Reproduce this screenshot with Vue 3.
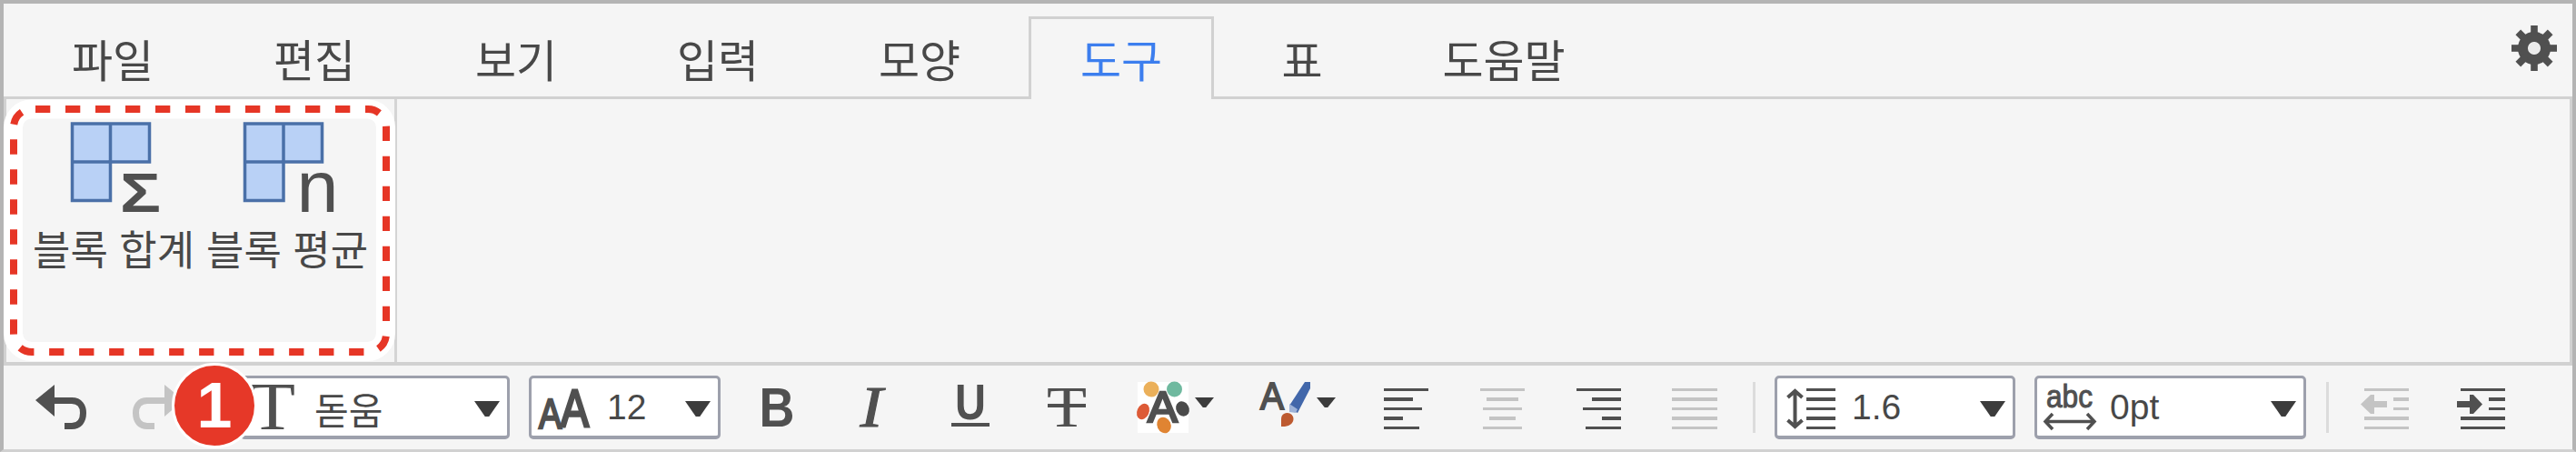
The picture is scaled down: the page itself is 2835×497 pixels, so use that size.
<script setup>
const tabs = [
  { label: '파일' },
  { label: '편집' },
  { label: '보기' },
  { label: '입력' },
  { label: '모양' },
  { label: '도구', active: true },
  { label: '표', size: 'short' },
  { label: '도움말', size: 'long' }
]

const rowY = [0, 10, 21, 31, 42]
const rowH = [3, 4, 3, 4, 3]
const aligns = [
  { name: 'left', rows: [[0, 49], [0, 32], [0, 42], [0, 21], [0, 39]] },
  { name: 'center', off: true, rows: [[0, 49], [7, 35], [3, 43], [10, 29], [3, 43]] },
  { name: 'right', rows: [[0, 49], [17, 32], [7, 42], [28, 21], [10, 39]] },
  { name: 'justify', off: true, rows: [[0, 50], [0, 50], [0, 50], [0, 50], [0, 50]] }
]
</script>

<template>
  <div class="editor">
    <nav class="tabs">
      <div v-for="t in tabs" :key="t.label" class="tab" :class="[t.size, { active: t.active }]">
        <span>{{ t.label }}</span>
      </div>
      <svg class="gear" width="50" height="50" viewBox="-25 -25 50 50">
        <circle r="12.5" fill="none" stroke="#505050" stroke-width="11" />
        <g fill="#505050">
          <rect v-for="a in [0, 90, 180, 270]" :key="a" x="-3.8" y="-25" width="7.6" height="12" :transform="`rotate(${a})`" />
          <rect v-for="a in [45, 135, 225, 315]" :key="a" x="-4" y="-25" width="8" height="12" :transform="`rotate(${a})`" />
        </g>
        <circle r="6.5" fill="#ebebeb" />
      </svg>
    </nav>

    <section class="ribbon">
      <div class="group">
        <div class="tool">
          <svg width="100" height="102" viewBox="0 0 100 102">
            <path d="M1.5 2H86.5V44H43.5V86.5H1.5Z" fill="#b9d1f6" stroke="#4a70a8" stroke-width="3.5" />
            <path d="M43.5 2V44M1.5 44H43.5" stroke="#4a70a8" stroke-width="3.5" />
            <text x="54" y="99" font-size="62" font-weight="700" textLength="45" lengthAdjust="spacingAndGlyphs">Σ</text>
          </svg>
          <span>블록 합계</span>
        </div>
        <div class="tool second">
          <svg width="102" height="102" viewBox="0 0 102 102">
            <path d="M1.5 2H86.5V44H44V86.5H1.5Z" fill="#b9d1f6" stroke="#4a70a8" stroke-width="3.5" />
            <path d="M44 2V44M1.5 44H44" stroke="#4a70a8" stroke-width="3.5" />
            <text x="58.5" y="99" font-size="79" textLength="46" lengthAdjust="spacingAndGlyphs">n</text>
          </svg>
          <span>블록 평균</span>
        </div>
      </div>
      <svg class="callout" width="434" height="292" viewBox="0 107 434 292">
        <rect x="14.5" y="120" width="410" height="266.5" rx="20" fill="none" stroke="#fff" stroke-width="21" />
        <path d="M39 120H405A20 20 0 0 1 425 140V367A20 20 0 0 1 405 387H35A20 20 0 0 1 15 367V140A20 20 0 0 1 35 120Z" fill="none" stroke="#e63626" stroke-width="8" stroke-dasharray="16.3 16.7" />
      </svg>
    </section>

    <section class="bar">
      <svg class="undo" width="57" height="50" viewBox="0 0 57 50">
        <path d="M0 17L21 0V35Z" fill="#505050" />
        <path d="M18 17.5H40C49 17.5 52.500 24 52.500 31C52.500 40 48 45.500 40 45.500H32" fill="none" stroke="#505050" stroke-width="7" />
      </svg>
      <svg class="redo" width="57" height="50" viewBox="0 0 57 50">
        <path d="M57 17L36 0V35Z" fill="#c4c4c4" />
        <path d="M39 17.5H17C8 17.5 4.500 24 4.500 31C4.500 40 9 45.500 17 45.500H25" fill="none" stroke="#c4c4c4" stroke-width="7" />
      </svg>

      <div class="select font">
        <svg width="50" height="64" viewBox="0 0 50 64">
          <text class="serif" x="0" y="56" font-size="74" textLength="50" lengthAdjust="spacingAndGlyphs">T</text>
        </svg>
        <span class="ko">돋움</span>
        <i class="caret"></i>
      </div>

      <div class="select size">
        <svg width="58" height="64" viewBox="0 0 58 64">
          <text x="1" y="54.500" font-size="46" stroke="#505050" stroke-width="2.500" textLength="25" lengthAdjust="spacingAndGlyphs">A</text>
          <text x="25" y="53" font-size="58" stroke="#505050" stroke-width="3" textLength="31" lengthAdjust="spacingAndGlyphs">A</text>
        </svg>
        <span>12</span>
        <i class="caret"></i>
      </div>

      <svg class="bold" width="34" height="56" viewBox="0 0 34 56">
        <text x="-3.500" y="49" font-size="61" font-weight="700" textLength="39" lengthAdjust="spacingAndGlyphs">B</text>
      </svg>
      <svg class="italic" width="34" height="56" viewBox="0 0 34 56">
        <text class="serif" x="1.500" y="48.500" font-size="63" font-style="italic" stroke="#505050" stroke-width="1" textLength="25" lengthAdjust="spacingAndGlyphs">I</text>
      </svg>
      <svg class="under" width="42" height="56" viewBox="0 0 42 56">
        <text x="4" y="41" font-size="55" font-weight="700" textLength="34" lengthAdjust="spacingAndGlyphs">U</text>
        <rect x="0" y="45" width="42" height="4" fill="#505050" />
      </svg>
      <svg class="strike" width="42" height="56" viewBox="0 0 42 56">
        <text class="serif" x="-1" y="49" font-size="64" textLength="44" lengthAdjust="spacingAndGlyphs">T</text>
        <rect x="0" y="24" width="42" height="4" fill="#505050" />
      </svg>

      <svg class="palette" width="56" height="56" viewBox="0 0 56 56">
        <rect width="56" height="56" fill="#fff" />
        <circle cx="15" cy="8" r="8.500" fill="#ebb05a" />
        <circle cx="40.500" cy="8" r="8.500" fill="#6fb99f" />
        <ellipse cx="6" cy="32.500" rx="6.500" ry="9" transform="rotate(24 6 32.500)" fill="#dd5a36" />
        <ellipse cx="49.500" cy="29.500" rx="7" ry="8.500" transform="rotate(-30 49.500 29.500)" fill="#4a4a4a" />
        <ellipse cx="29" cy="47.500" rx="7.500" ry="9" transform="rotate(-25 29 47.500)" fill="#e08432" />
        <text x="11" y="44" font-size="48" stroke="#505050" stroke-width="2.500" textLength="33" lengthAdjust="spacingAndGlyphs">A</text>
      </svg>
      <i class="caret small"></i>
      <svg class="brush" width="56" height="56" viewBox="0 0 56 56">
        <text x="1" y="30" font-size="42" stroke="#505050" stroke-width="2" textLength="26" lengthAdjust="spacingAndGlyphs">A</text>
        <path d="M50 0H56V7L42 34L36 31L33 26Z" fill="#4267aa" />
        <path d="M33 24L42 30L40 34L33 33Z" fill="#9eb3d8" />
        <path d="M27 35C32 32 38 36 37.500 41C37 47 31 49.500 24 49V41C24 38 25 36 27 35Z" fill="#bd5a30" />
      </svg>
      <i class="caret small"></i>

      <svg v-for="a in aligns" :key="a.name" class="align" :class="a.name" width="50" height="46" viewBox="0 0 50 46">
        <rect v-for="(r, i) in a.rows" :key="i" :x="r[0]" :y="rowY[i]" :width="r[1]" :height="rowH[i]" :fill="a.off ? '#c4c4c4' : '#505050'" />
      </svg>
      <i class="sep first"></i>

      <div class="select line">
        <svg width="54" height="46" viewBox="0 0 54 46">
          <rect v-for="(y, i) in rowY" :key="y" x="22" :y="y" width="32" :height="rowH[i]" fill="#505050" />
          <path d="M9.500 3V42M1.500 10L9.500 3L17.500 10M1.500 35L9.500 42L17.500 35" fill="none" stroke="#505050" stroke-width="4" />
        </svg>
        <span>1.6</span>
        <i class="caret"></i>
      </div>

      <div class="select spacing">
        <svg width="58" height="54" viewBox="0 0 58 54">
          <text x="3" y="27.500" font-size="35" stroke="#505050" stroke-width="1" textLength="51" lengthAdjust="spacingAndGlyphs">abc</text>
          <path d="M2 43.500H56M10 35L2 43.500L10 52M48 35L56 43.500L48 52" fill="none" stroke="#505050" stroke-width="3.500" />
        </svg>
        <span>0pt</span>
        <i class="caret"></i>
      </div>
      <i class="sep second"></i>

      <svg class="outdent" width="53" height="46" viewBox="0 0 53 46" fill="#c4c4c4">
        <path d="M4 0H53V3H4ZM36 10H53V14H36ZM36 21H53V24H36ZM4 31H53V35H4ZM4 42H53V45H4Z" />
        <path d="M0 17.500L11 7H15V14H29V21H15V28H11Z" />
      </svg>
      <svg class="indent" width="53" height="46" viewBox="0 0 53 46" fill="#505050">
        <path d="M4 0H53V3H4ZM35 10H53V14H35ZM35 21H53V24H35ZM4 31H53V35H4ZM4 42H53V45H4Z" />
        <path d="M28 17.500L18 7H14V14H0V21H14V28H18Z" />
      </svg>
    </section>

    <div class="badge">1</div>
  </div>
</template>

<style>
body { margin: 0; overflow: hidden; }
</style>

<style scoped>
.editor {
  box-sizing: border-box;
  position: relative;
  width: 2835px;
  height: 497px;
  border: 4px solid #b4b4b4;
  border-bottom: 3px solid #d1d1d1;
  background: #f5f5f5;
  color: #484848;
  font-family: "Liberation Sans", "Noto Sans CJK KR", sans-serif;
  display: flex;
  flex-direction: column;
}
svg { display: block; flex: none; overflow: visible; }
svg text { fill: #505050; font-family: "Liberation Sans", sans-serif; }
svg text.serif { font-family: "Liberation Serif", serif; }

.tabs {
  box-sizing: border-box;
  height: 105px;
  flex: none;
  display: flex;
  align-items: flex-end;
  gap: 18px;
  padding-left: 18px;
  border-bottom: 3px solid #d1d1d1;
}
.tab {
  box-sizing: border-box;
  width: 204px;
  height: 88px;
  display: flex;
  justify-content: center;
  font-size: 49px;
  line-height: 95px;
  white-space: nowrap;
  border: 3px solid transparent;
  border-bottom: 0;
}
.tab.short { width: 158px; }
.tab.long { width: 250px; }
.tab.active {
  height: 91px;
  margin-bottom: -3px;
  background: #f5f5f5;
  border-color: #d1d1d1;
  color: #3c7eee;
}
.gear { margin: 0 17px 28px auto; }

.ribbon {
  box-sizing: border-box;
  position: relative;
  height: 293px;
  flex: none;
  border: solid #d1d1d1;
  border-width: 0 3px 4px;
}
.group {
  box-sizing: border-box;
  width: 430px;
  height: 289px;
  display: flex;
  padding: 25px 0 0 29px;
  border-right: 3px solid #d4d4d4;
}
.tool {
  width: 182px;
  margin-right: 9px;
  font-size: 45px;
  white-space: nowrap;
}
.tool svg { margin-left: 42px; }
.tool.second svg { margin-left: 41px; }
.tool span { display: block; line-height: 60px; margin-top: 11px; }
.callout { position: absolute; left: -7px; top: -2px; }

.bar {
  height: 92px;
  flex: none;
  display: flex;
  align-items: flex-start;
}
.bar > * { flex: none; }
.undo { margin: 21px 0 0 35px; }
.redo { margin: 21px 0 0 49px; }

.select {
  box-sizing: border-box;
  height: 70px;
  margin-top: 11px;
  border: 3px solid #9da0ac;
  border-bottom-width: 4px;
  border-radius: 5px;
  background: #fff;
  display: flex;
  align-items: flex-start;
  font-size: 39px;
  line-height: 64px;
}
.select .caret { margin: 25px 8px 0 auto; }
.select.font { width: 297px; margin-left: 62px; }
.select.font svg { margin-left: 8px; }
.select.font .ko { margin-left: 21px; font-size: 41px; line-height: 74px; }
.select.size { width: 211px; margin-left: 21px; }
.select.size svg { margin-left: 7px; }
.select.size span { margin-left: 18px; }
.select.line { width: 265px; margin-left: 21px; }
.select.line svg { margin: 11px 0 0 10px; }
.select.line span { margin-left: 18px; }
.select.spacing { width: 299px; margin-left: 21px; }
.select.spacing svg { margin: 4px 0 0 7px; }
.select.spacing span { margin-left: 15px; }

.caret {
  width: 28px;
  height: 17px;
  background: #3c3c3c;
  clip-path: polygon(0 0, 100% 0, 58% 100%, 42% 100%);
}
.caret.small { width: 21px; height: 11px; margin: 35px 0 0 7px; }

.bold { margin: 18px 0 0 46px; }
.italic { margin: 18px 0 0 72px; }
.under { margin: 18px 0 0 68px; }
.strike { margin: 18px 0 0 64px; }
.palette { margin: 18px 0 0 57px; }
.brush { margin: 18px 0 0 50px; }
.brush + .caret.small { margin-left: 7px; }
.align { margin: 25px 0 0 56px; }
.align.left { margin-left: 53px; }
.align.justify { margin-left: 55px; }
.sep { width: 3px; height: 56px; margin-top: 18px; background: #dcdcdc; }
.sep.first { margin-left: 39px; }
.sep.second { margin-left: 22px; }
.outdent { margin: 25px 0 0 35px; }
.indent { margin: 25px 0 0 53px; }

.badge {
  position: absolute;
  left: 185px;
  top: 394.500px;
  width: 88px;
  height: 88px;
  border: 3px solid #fff;
  border-radius: 50%;
  background: #e63828;
  color: #fff;
  font-size: 70px;
  font-weight: 700;
  line-height: 88px;
  text-align: center;
}
</style>
